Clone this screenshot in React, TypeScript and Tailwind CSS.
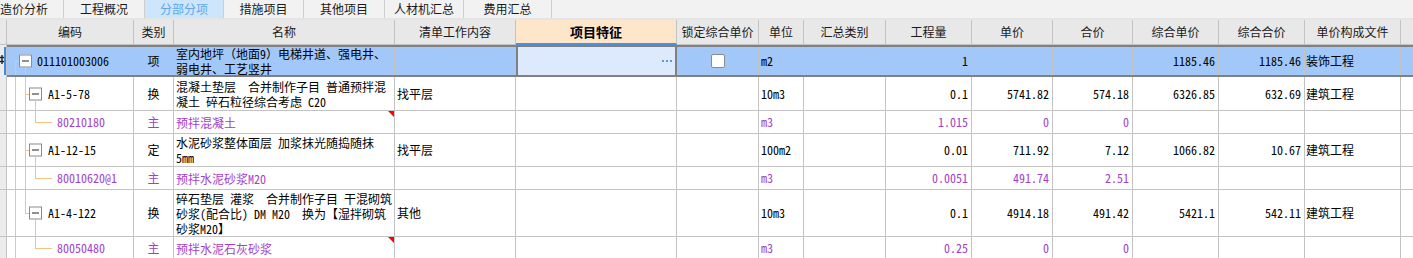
import React from "react";

type Row = {
  h: string;
  level: 0 | 1 | 2;
  code: string;
  type: string;
  name: string[];
  content?: string;
  unit: string;
  qty: string;
  price?: string;
  total?: string;
  cprice?: string;
  ctotal?: string;
  file?: string;
  purple?: boolean;
  flag?: boolean;
  // tree line flags
  l0: "full" | "lower";
  l1: "none" | "full" | "upper" | "lower";
  l2: "none" | "upper" | "lower";
};

const ROWS: Row[] = [
  {
    h: "h-[32px]",
    level: 0,
    code: "011101003006",
    type: "项",
    name: ["室内地坪（地面9）电梯井道、强电井、", "弱电井、工艺竖井"],
    unit: "m2",
    qty: "1",
    cprice: "1185.46",
    ctotal: "1185.46",
    file: "装饰工程",
    l0: "lower",
    l1: "lower",
    l2: "none",
  },
  {
    h: "h-[34px]",
    level: 1,
    code: "A1-5-78",
    type: "换",
    name: ["混凝土垫层　合并制作子目 普通预拌混", "凝土 碎石粒径综合考虑 C20"],
    content: "找平层",
    unit: "10m3",
    qty: "0.1",
    price: "5741.82",
    total: "574.18",
    cprice: "6326.85",
    ctotal: "632.69",
    file: "建筑工程",
    l0: "full",
    l1: "full",
    l2: "lower",
  },
  {
    h: "h-[23px]",
    level: 2,
    code: "80210180",
    type: "主",
    name: ["预拌混凝土"],
    unit: "m3",
    qty: "1.015",
    price: "0",
    total: "0",
    purple: true,
    flag: true,
    l0: "full",
    l1: "full",
    l2: "upper",
  },
  {
    h: "h-[33px]",
    level: 1,
    code: "A1-12-15",
    type: "定",
    name: ["水泥砂浆整体面层 加浆抹光随捣随抹", "5mm"],
    content: "找平层",
    unit: "100m2",
    qty: "0.01",
    price: "711.92",
    total: "7.12",
    cprice: "1066.82",
    ctotal: "10.67",
    file: "建筑工程",
    l0: "full",
    l1: "full",
    l2: "lower",
  },
  {
    h: "h-[23px]",
    level: 2,
    code: "80010620@1",
    type: "主",
    name: ["预拌水泥砂浆M20"],
    unit: "m3",
    qty: "0.0051",
    price: "491.74",
    total: "2.51",
    purple: true,
    l0: "full",
    l1: "full",
    l2: "upper",
  },
  {
    h: "h-[47px]",
    level: 1,
    code: "A1-4-122",
    type: "换",
    name: ["碎石垫层 灌浆　合并制作子目 干混砌筑", "砂浆(配合比) DM M20　换为【湿拌砌筑", "砂浆M20】"],
    content: "其他",
    unit: "10m3",
    qty: "0.1",
    price: "4914.18",
    total: "491.42",
    cprice: "5421.1",
    ctotal: "542.11",
    file: "建筑工程",
    l0: "full",
    l1: "upper",
    l2: "lower",
  },
  {
    h: "h-[23px]",
    level: 2,
    code: "80050480",
    type: "主",
    name: ["预拌水泥石灰砂浆"],
    unit: "m3",
    qty: "0.25",
    price: "0",
    total: "0",
    purple: true,
    flag: true,
    l0: "full",
    l1: "none",
    l2: "upper",
  },
];

const HEADERS = [
  { label: "编码", w: "w-[127px]" },
  { label: "类别", w: "w-[40px]" },
  { label: "名称", w: "w-[221px]" },
  { label: "清单工作内容", w: "w-[121px]" },
  { label: "项目特征", w: "w-[161px]", active: true },
  { label: "锁定综合单价", w: "w-[82px]" },
  { label: "单位", w: "w-[45px]" },
  { label: "汇总类别", w: "w-[82px]" },
  { label: "工程量", w: "w-[86px]" },
  { label: "单价", w: "w-[81px]" },
  { label: "合价", w: "w-[80px]" },
  { label: "综合单价", w: "w-[86px]" },
  { label: "综合合价", w: "w-[86px]" },
  { label: "单价构成文件", w: "w-[96px]" },
];

const TABS = [
  { label: "造价分析", w: "w-[64px] justify-start" },
  { label: "工程概况", w: "w-[81px] justify-center" },
  { label: "分部分项", w: "w-[79px] justify-center", active: true },
  { label: "措施项目", w: "w-[80px] justify-center" },
  { label: "其他项目", w: "w-[81px] justify-center" },
  { label: "人材机汇总", w: "w-[79px] justify-center" },
  { label: "费用汇总", w: "w-[88px] justify-center" },
];

const LINE = "absolute w-px bg-[#f7c27f]";

function MinusBox({ left }: { left: string }) {
  return (
    <div
      className={`absolute ${left} top-1/2 -translate-y-1/2 w-[13px] h-[13px] border border-[#8a8a8a] bg-white flex items-center justify-center`}
    >
      <div className="w-[7px] h-px bg-[#222]" />
    </div>
  );
}

function CodeCell({ row }: { row: Row }) {
  const pad = row.level === 0 ? "pl-[30px]" : row.level === 1 ? "pl-[41px]" : "pl-[50px]";
  return (
    <div className={`relative w-[127px] h-full border-r border-[#c3c3c3] flex items-center ${pad} overflow-hidden`}>
      {/* level 0 line */}
      {row.l0 === "full" && <div className={`${LINE} left-[8px] top-0 bottom-0`} />}
      {row.l0 === "lower" && <div className={`${LINE} left-[8px] top-1/2 bottom-0`} />}
      {/* level 1 line */}
      {row.l1 === "full" && <div className={`${LINE} left-[18px] top-0 bottom-0`} />}
      {row.l1 === "upper" && <div className={`${LINE} left-[18px] top-0 h-1/2`} />}
      {row.l1 === "lower" && <div className={`${LINE} left-[18px] top-[calc(50%+7px)] bottom-0`} />}
      {/* level 2 line */}
      {row.l2 === "upper" && <div className={`${LINE} left-[28px] top-0 h-1/2`} />}
      {row.l2 === "lower" && <div className={`${LINE} left-[28px] top-[calc(50%+7px)] bottom-0`} />}

      {row.level === 0 && (
        <>
          <div className="absolute left-[8px] top-1/2 w-[4px] h-px bg-[#f7c27f]" />
          <MinusBox left="left-[12px]" />
        </>
      )}
      {row.level === 1 && (
        <>
          <div className="absolute left-[18px] top-1/2 w-[4px] h-px bg-[#f7c27f]" />
          <MinusBox left="left-[22px]" />
        </>
      )}
      {row.level === 2 && <div className="absolute left-[28px] top-1/2 w-[17px] h-px bg-[#f7c27f]" />}

      <span className={`relative whitespace-nowrap ${row.purple ? "text-[#a23fc8]" : "text-black"}`}>{row.code}</span>
    </div>
  );
}

function Num({ w, v, purple }: { w: string; v?: string; purple?: boolean }) {
  return (
    <div
      className={`${w} h-full border-r border-[#c3c3c3] flex items-center justify-end pr-[3px] whitespace-nowrap ${
        purple ? "text-[#a23fc8]" : "text-black"
      }`}
    >
      {v}
    </div>
  );
}

function TableRow({ row, selected }: { row: Row; selected?: boolean }) {
  const color = row.purple ? "text-[#a23fc8]" : "text-black";
  return (
    <div className={`flex ${row.h} ${selected ? "" : "border-b border-[#c3c3c3]"}`}>
      <div className="w-[7px] h-full bg-[#ececec] border-r border-[#c3c3c3] relative overflow-hidden shrink-0">
        {selected && (
          <>
            <svg className="absolute left-0 top-[10px]" width="4" height="9" viewBox="0 0 4 9">
              <path d="M0 2.5H4M0 6.5H4M2 0V9" stroke="#222" strokeWidth="1.4" fill="none" />
            </svg>
            <div className="absolute right-0 top-[2px] bottom-[2px] w-[2px] bg-[#3a8ee6]" />
          </>
        )}
      </div>
      <div
        className={`flex flex-1 h-full ${
          selected ? "bg-[#a1c8f9] border-y-2 border-[#808080]" : "bg-white"
        }`}
      >
        <CodeCell row={row} />
        <div className={`w-[40px] h-full border-r border-[#c3c3c3] flex items-center justify-center ${color}`}>
          {row.type}
        </div>
        <div
          className={`relative w-[221px] h-full border-r border-[#c3c3c3] flex flex-col justify-center pl-[2px] leading-[15px] ${color}`}
        >
          {row.name.map((n, i) => (
            <div key={i} className="whitespace-nowrap">
              {n}
            </div>
          ))}
          {row.flag && (
            <div className="absolute top-0 right-0 w-0 h-0 border-t-[6px] border-l-[6px] border-t-[#ff0000] border-l-transparent" />
          )}
        </div>
        <div className={`w-[121px] h-full ${selected ? "" : "border-r border-[#c3c3c3]"} flex items-center pl-[2px]`}>
          {row.content}
        </div>
        {selected ? (
          <div className="relative w-[161px] h-full bg-[#dde9fd] border-x-2 border-[#808080] flex items-center justify-end pr-[3px]">
            <div className="flex gap-[2px]">
              <div className="w-[2px] h-[2px] bg-[#5b9bd5]" />
              <div className="w-[2px] h-[2px] bg-[#5b9bd5]" />
              <div className="w-[2px] h-[2px] bg-[#5b9bd5]" />
            </div>
          </div>
        ) : (
          <div className="w-[161px] h-full border-r border-[#c3c3c3]" />
        )}
        <div className="w-[82px] h-full border-r border-[#c3c3c3] flex items-center justify-center">
          {selected && <div className="w-[14px] h-[14px] bg-white border border-[#8c8c8c] rounded-[2px]" />}
        </div>
        <div className={`w-[45px] h-full border-r border-[#c3c3c3] flex items-center pl-[2px] ${color}`}>{row.unit}</div>
        <div className="w-[82px] h-full border-r border-[#c3c3c3]" />
        <Num w="w-[86px]" v={row.qty} purple={row.purple} />
        <Num w="w-[81px]" v={row.price} purple={row.purple} />
        <Num w="w-[80px]" v={row.total} purple={row.purple} />
        <Num w="w-[86px]" v={row.cprice} />
        <Num w="w-[86px]" v={row.ctotal} />
        <div className="w-[96px] h-full border-r border-[#c3c3c3] flex items-center pl-[1px] whitespace-nowrap">
          {row.file}
        </div>
        <div className="flex-1" />
      </div>
    </div>
  );
}

export default function App() {
  return (
    <div className="w-[1413px] h-[258px] overflow-hidden bg-white text-[12px] text-black font-['Noto_Sans_Mono_CJK_SC','Noto_Sans_CJK_SC',sans-serif]">
      {/* Tabs */}
      <div className="flex h-[20px] bg-[#f2f2f2] border-b-2 border-[#e4e4e4]">
        {TABS.map((t) => (
          <div
            key={t.label}
            className={`${t.w} h-full flex items-center border-r border-[#cfcfcf] ${
              t.active ? "bg-[#cde6fb] text-[#5ea6ec]" : "text-[#1a1a1a]"
            }`}
          >
            {t.label}
          </div>
        ))}
      </div>

      {/* Header */}
      <div className="flex h-[25px] bg-[#e8e8e8]">
        <div className="w-[7px] h-full border-r border-b border-[#c3c3c3]" />
        {HEADERS.map((h) => (
          <div
            key={h.label}
            className={`${h.w} h-full flex items-center justify-center border-r border-[#c3c3c3] whitespace-nowrap ${
              h.active ? "bg-[#fde6c9] font-bold border-b-2 border-b-[#4a90e2] text-[13px]" : "border-b text-[#1a1a1a]"
            }`}
          >
            {h.label}
          </div>
        ))}
        <div className="flex-1 h-full border-b border-[#c3c3c3]" />
      </div>

      {/* Rows */}
      {ROWS.map((r, i) => (
        <TableRow key={r.code} row={r} selected={i === 0} />
      ))}
    </div>
  );
}
